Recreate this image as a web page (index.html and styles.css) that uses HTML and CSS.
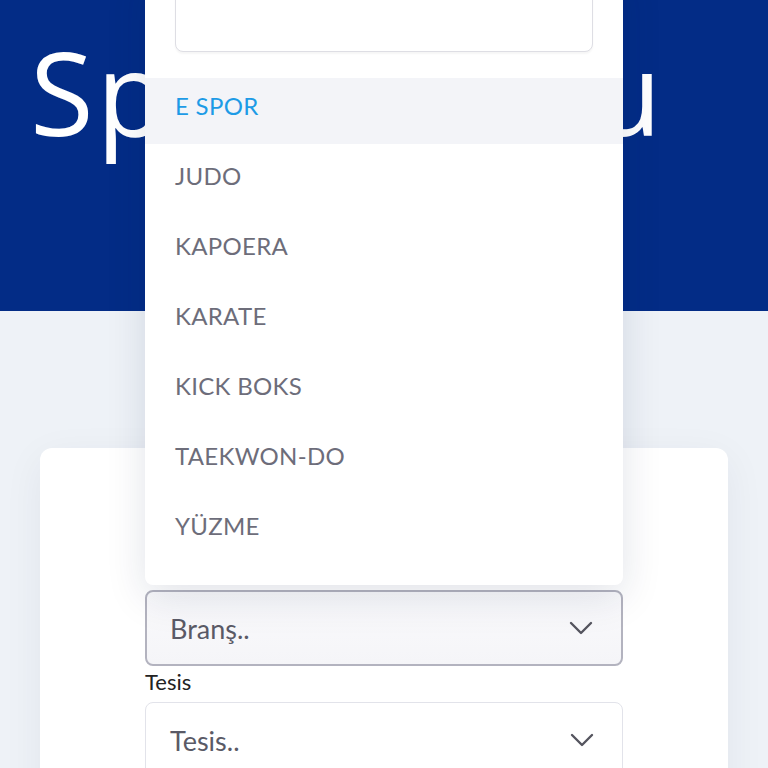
FILE: index.html
```html
<!DOCTYPE html>
<html lang="tr">
<head>
  <meta charset="UTF-8">
  <meta name="viewport" content="width=device-width, initial-scale=1.0">
  <title>Spor Okulu - Başvuru</title>
  <link rel="stylesheet" href="styles.css">
</head>
<body>
  <header class="hero">
    <h1>Spor Okulu</h1>
  </header>

  <main class="page">
    <div class="card">
      <form class="form">
        <div class="field">
          <label class="label">Branş</label>
          <div class="select-wrap">
            <div class="dropdown">
              <input class="dropdown-search" type="text">
              <ul class="options">
                <li class="option active">E SPOR</li>
                <li class="option">JUDO</li>
                <li class="option">KAPOERA</li>
                <li class="option">KARATE</li>
                <li class="option">KICK BOKS</li>
                <li class="option">TAEKWON-DO</li>
                <li class="option">YÜZME</li>
              </ul>
            </div>
            <div class="select open">
              <span>Branş..</span>
              <svg class="chevron" width="24" height="14" viewBox="0 0 24 14"><path d="M2 2l10 10L22 2" fill="none" stroke="#55555f" stroke-width="2.4" stroke-linecap="round" stroke-linejoin="round"/></svg>
            </div>
          </div>
        </div>

        <div class="field">
          <label class="label">Tesis</label>
          <div class="select-wrap">
            <div class="select">
              <span>Tesis..</span>
              <svg class="chevron" width="24" height="14" viewBox="0 0 24 14"><path d="M2 2l10 10L22 2" fill="none" stroke="#55555f" stroke-width="2.4" stroke-linecap="round" stroke-linejoin="round"/></svg>
            </div>
          </div>
        </div>
      </form>
    </div>
  </main>
</body>
</html>
```

FILE: styles.css
```css
body {
  font-family: Lato, 'Open Sans', sans-serif;
  margin: 0;
  padding: 0;
  background-color: #eef2f7;
  color: #222;
  overflow: hidden;
}
.hero {
  background-color: #032c86;
  height: 311px;
  padding: 0 30px;
  box-sizing: border-box;
}
.hero h1 {
  margin: 0;
  padding-top: 22px;
  font-family: 'Open Sans', Lato, sans-serif;
  font-size: 116px;
  font-weight: 400;
  letter-spacing: 3px;
  color: #fff;
  line-height: 1.2;
  white-space: nowrap;
}
.page {
  padding: 137px 40px 0;
}
.card {
  background-color: #fff;
  border-radius: 12px;
  box-shadow: 0 10px 40px rgba(20, 30, 70, 0.06);
  padding: 108px 105px 40px;
  min-height: 400px;
}
.form {
  display: flex;
  flex-direction: column;
}
.field {
  display: flex;
  flex-direction: column;
}
.label {
  font-size: 22px;
  color: #222;
  line-height: 28px;
  height: 34px;
}
.select-wrap {
  position: relative;
}
.select {
  height: 76px;
  box-sizing: border-box;
  border: 1px solid #e2e3ea;
  border-radius: 8px;
  background-color: #fff;
  display: flex;
  align-items: center;
  justify-content: space-between;
  padding: 0 28px 0 24px;
  font-size: 27px;
  color: #5a5a66;
}
.select.open {
  border: 2px solid #b3b3bf;
  background: linear-gradient(#fafafc, #f5f5f8);
  padding-left: 23px;
  margin-bottom: 2px;
}
.chevron {
  display: block;
}
.dropdown {
  position: absolute;
  left: 0;
  right: 0;
  bottom: calc(100% + 5px);
  background-color: #fff;
  border-radius: 8px;
  box-shadow: 0 12px 40px rgba(20, 30, 70, 0.12);
  padding: 25px 0 17px;
  z-index: 10;
}
.dropdown-search {
  display: block;
  width: calc(100% - 60px);
  height: 60px;
  margin: 0 30px 26px;
  box-sizing: border-box;
  border: 1px solid #dedee4;
  border-radius: 8px;
  box-shadow: 0 2px 2px rgba(0, 0, 0, 0.04);
}
.options {
  list-style: none;
  margin: 0;
  padding: 0;
}
.option {
  height: 66px;
  margin-bottom: 4px;
  box-sizing: border-box;
  padding: 0 30px 12px;
  display: flex;
  align-items: center;
  font-size: 24px;
  letter-spacing: 0.3px;
  color: #6d6d7a;
}
.option.active {
  background-color: #f3f4f8;
  color: #1d9be6;
}
```
